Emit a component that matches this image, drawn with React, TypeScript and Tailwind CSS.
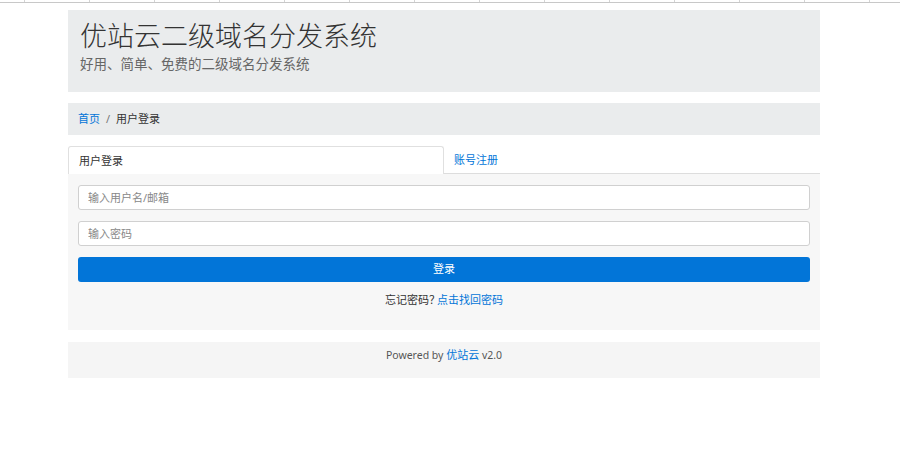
import React, { useState } from 'react';

const font = { fontFamily: '"Noto Sans", "Noto Sans CJK SC", sans-serif' };

export default function App() {
  const [tab, setTab] = useState<'login' | 'register'>('login');
  const cells = Array.from({ length: 14 });

  return (
    <div className="min-h-[453px] w-[900px] bg-white text-[#333]" style={font}>
      {/* leftover table row at the very top */}
      <div className="flex h-[3px] border-b border-[#c8c8c8]">
        <div className="w-[25px] shrink-0 border-r border-[#d4d4d4]" />
        {cells.map((_, i) => (
          <div key={i} className="w-[65px] shrink-0 border-r border-[#d4d4d4]" />
        ))}
      </div>

      <div className="ml-[68px] mt-[7px] w-[752px]">
        <div className="h-[82px] bg-[#eaeced] px-3 pt-[9px]">
          <h1 className="text-[27px] leading-[34px] font-light text-[#333]">优站云二级域名分发系统</h1>
          <p className="mt-[2px] text-[13.5px] leading-[18px] text-[#666]">好用、简单、免费的二级域名分发系统</p>
        </div>

        <nav className="mt-[11px] flex h-[32px] items-center bg-[#eaeced] px-[10px] text-[11px]">
          <a href="#" className="text-[#0275d8]">首页</a>
          <span className="px-[6px] text-[#777]">/</span>
          <span className="text-[#333]">用户登录</span>
        </nav>

        <div className="mt-[11px] flex h-[28px] text-[11px]">
          <button
            onClick={() => setTab('login')}
            className={
              tab === 'login'
                ? 'w-1/2 rounded-t-[3px] border border-b-0 border-[#e0e0e0] bg-white px-[10px] pt-[2px] text-left text-[#333]'
                : 'w-1/2 border-b border-[#ddd] px-[10px] pt-[2px] text-left text-[#0275d8]'
            }
          >
            用户登录
          </button>
          <button
            onClick={() => setTab('register')}
            className={
              tab === 'register'
                ? 'w-1/2 rounded-t-[3px] border border-b-0 border-[#e0e0e0] bg-white px-[10px] pt-[2px] text-left text-[#333]'
                : 'w-1/2 border-b border-[#ddd] px-[10px] pt-[2px] text-left text-[#0275d8]'
            }
          >
            账号注册
          </button>
        </div>

        <div className="flex h-[156px] flex-col gap-[11px] bg-[#f7f7f7] px-[10px] pt-[11px] text-[11px]">
          <input
            placeholder="输入用户名/邮箱"
            className="h-[25px] w-full rounded-[3px] border border-[#d0d0d0] bg-white px-[9px] text-[11px] placeholder-[#888] outline-none"
          />
          <input
            type="password"
            placeholder="输入密码"
            className="h-[25px] w-full rounded-[3px] border border-[#d0d0d0] bg-white px-[9px] text-[11px] placeholder-[#888] outline-none"
          />
          <button className="h-[25px] w-full rounded-[3px] bg-[#0275d8] text-[11px] text-white">登录</button>
          <p className="text-center text-[11px] leading-[14px] text-[#333]">
            忘记密码<span className="tracking-[-3px]">？</span><a href="#" className="text-[#0275d8]">点击找回密码</a>
          </p>
        </div>

        <footer className="mt-[12px] flex h-[36px] items-start justify-center bg-[#f5f5f5] pt-[5px] text-[10.5px] text-[#555]">
          <span>
            Powered by <a href="#" className="text-[11px] text-[#0275d8]">优站云</a> v2.0
          </span>
        </footer>
      </div>
    </div>
  );
}
